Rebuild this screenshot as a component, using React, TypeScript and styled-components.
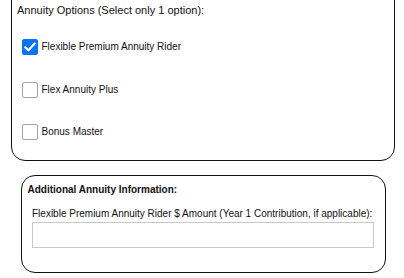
import React from 'react';
import styled, { createGlobalStyle } from 'styled-components';

const GlobalStyle = createGlobalStyle`
  html, body {
    margin: 0;
    padding: 0;
    background: #fff;
    overflow: hidden;
  }
  body {
    font-family: 'Liberation Sans', Arial, sans-serif;
    font-size: 10px;
    color: #111;
  }
`;

const Page = styled.div`
  width: 404px;
  height: 278px;
  overflow: hidden;
`;

const Panel = styled.div<{ $top?: boolean }>`
  border: 1.5px solid #111;
  border-radius: ${(p) => (p.$top ? '0 0 14px 14px' : '14px')};
  margin: ${(p) => (p.$top ? '-12px 9px 0 11px' : '14px 18px 0 21px')};
  padding: ${(p) => (p.$top ? '14px 5px 20px 5px' : '6.5px 11.5px 24.5px 5.5px')};
`;

const Heading = styled.div<{ $bold?: boolean; $size?: number }>`
  line-height: 14px;
  font-size: ${(p) => p.$size ?? 10}px;
  font-weight: ${(p) => (p.$bold ? 700 : 400)};
  white-space: nowrap;
`;

const OptionList = styled.div`
  display: flex;
  flex-direction: column;
  gap: 26.5px;
  margin-top: 22px;
  padding-left: 4.5px;
`;

const OptionRow = styled.label`
  display: flex;
  align-items: center;
  gap: 4px;
  height: 16px;
  line-height: 14px;
`;

const Box = styled.span<{ $checked?: boolean }>`
  box-sizing: border-box;
  width: 16px;
  height: 16px;
  border-radius: 2px;
  border: 1px solid ${(p) => (p.$checked ? '#0a75f0' : '#a3a3a3')};
  background: ${(p) => (p.$checked ? '#0a75f0' : '#fff')};
  display: flex;
  align-items: center;
  justify-content: center;
`;

const Field = styled.div`
  padding-left: 4.5px;
  margin-top: 10px;
`;

const FieldLabel = styled.div`
  line-height: 14px;
  white-space: nowrap;
`;

const Input = styled.div`
  box-sizing: border-box;
  margin-top: 1px;
  height: 26px;
  border: 1px solid #c8c8c8;
  background: #fff;
`;

const options = [
  { label: 'Flexible Premium Annuity Rider', checked: true },
  { label: 'Flex Annuity Plus', checked: false },
  { label: 'Bonus Master', checked: false },
];

const Check = () => (
  <svg width="12" height="10" viewBox="0 0 12 10">
    <path d="M1.3 5.2 L4.4 8.2 L10.7 1.6" fill="none" stroke="#fff" strokeWidth="2.2" strokeLinecap="round" strokeLinejoin="round" />
  </svg>
);

export default function App() {
  return (
    <Page>
      <GlobalStyle />
      <Panel $top>
        <Heading $size={11}>Annuity Options (Select only 1 option):</Heading>
        <OptionList>
          {options.map((o) => (
            <OptionRow key={o.label}>
              <Box $checked={o.checked}>{o.checked && <Check />}</Box>
              <span>{o.label}</span>
            </OptionRow>
          ))}
        </OptionList>
      </Panel>
      <Panel>
        <Heading $bold>Additional Annuity Information:</Heading>
        <Field>
          <FieldLabel>Flexible Premium Annuity Rider $ Amount (Year 1 Contribution, if applicable):</FieldLabel>
          <Input />
        </Field>
      </Panel>
    </Page>
  );
}
